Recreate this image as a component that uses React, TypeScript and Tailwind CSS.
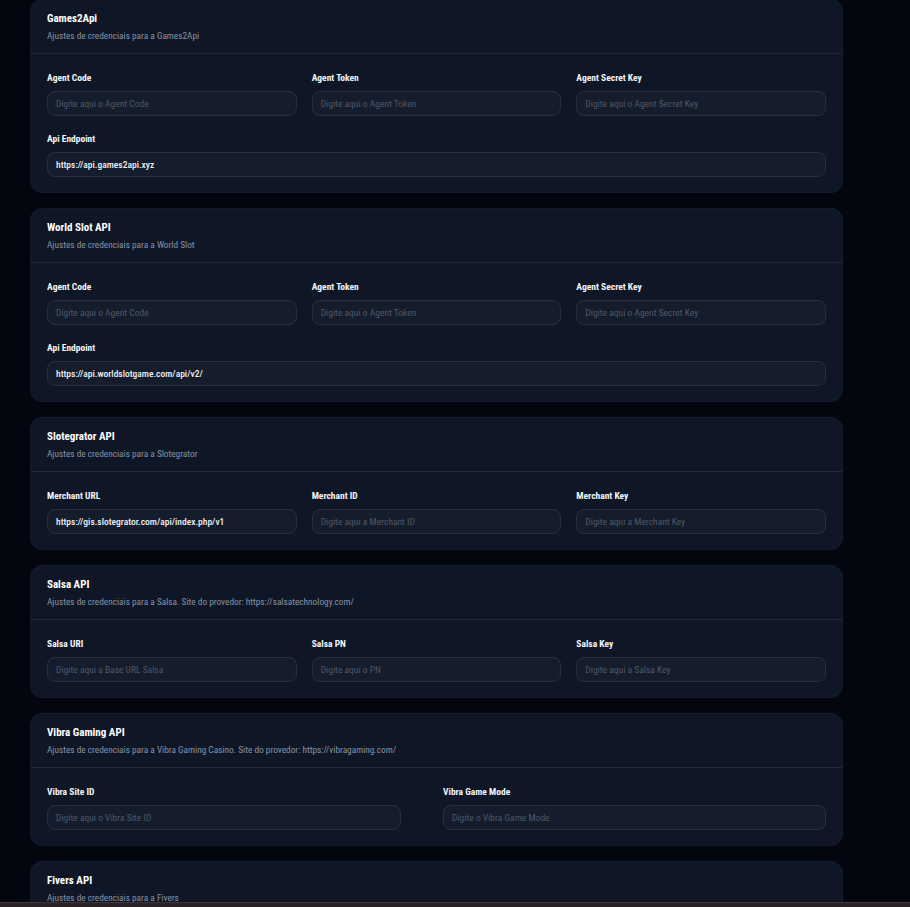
import React from 'react'

interface Field {
  label: string
  placeholder: string
  value?: string
}

interface Provider {
  title: string
  subtitle: string
  rows: Field[][]
  cols?: string
}

const providers: Provider[] = [
  {
    title: 'Games2Api',
    subtitle: 'Ajustes de credenciais para a Games2Api',
    rows: [
      [
        { label: 'Agent Code', placeholder: 'Digite aqui o Agent Code' },
        { label: 'Agent Token', placeholder: 'Digite aqui o Agent Token' },
        { label: 'Agent Secret Key', placeholder: 'Digite aqui o Agent Secret Key' },
      ],
      [{ label: 'Api Endpoint', placeholder: 'Digite aqui o Api Endpoint', value: 'https://api.games2api.xyz' }],
    ],
  },
  {
    title: 'World Slot API',
    subtitle: 'Ajustes de credenciais para a World Slot',
    rows: [
      [
        { label: 'Agent Code', placeholder: 'Digite aqui o Agent Code' },
        { label: 'Agent Token', placeholder: 'Digite aqui o Agent Token' },
        { label: 'Agent Secret Key', placeholder: 'Digite aqui o Agent Secret Key' },
      ],
      [{ label: 'Api Endpoint', placeholder: 'Digite aqui o Api Endpoint', value: 'https://api.worldslotgame.com/api/v2/' }],
    ],
  },
  {
    title: 'Slotegrator API',
    subtitle: 'Ajustes de credenciais para a Slotegrator',
    rows: [
      [
        { label: 'Merchant URL', placeholder: 'Digite aqui a Merchant URL', value: 'https://gis.slotegrator.com/api/index.php/v1' },
        { label: 'Merchant ID', placeholder: 'Digite aqui a Merchant ID' },
        { label: 'Merchant Key', placeholder: 'Digite aqui a Merchant Key' },
      ],
    ],
  },
  {
    title: 'Salsa API',
    subtitle: 'Ajustes de credenciais para a Salsa. Site do provedor: https://salsatechnology.com/',
    rows: [
      [
        { label: 'Salsa URI', placeholder: 'Digite aqui a Base URL Salsa' },
        { label: 'Salsa PN', placeholder: 'Digite aqui o PN' },
        { label: 'Salsa Key', placeholder: 'Digite aqui a Salsa Key' },
      ],
    ],
  },
  {
    title: 'Vibra Gaming API',
    subtitle: 'Ajustes de credenciais para a Vibra Gaming Casino. Site do provedor: https://vibragaming.com/',
    cols: 'vibra',
    rows: [
      [
        { label: 'Vibra Site ID', placeholder: 'Digite aqui o Vibra Site ID' },
        { label: 'Vibra Game Mode', placeholder: 'Digite o Vibra Game Mode' },
      ],
    ],
  },
  {
    title: 'Fivers API',
    subtitle: 'Ajustes de credenciais para a Fivers',
    rows: [
      [
        { label: 'Agent Code', placeholder: 'Digite aqui o Agent Code' },
        { label: 'Agent Token', placeholder: 'Digite aqui o Agent Token' },
        { label: 'Agent Secret Key', placeholder: 'Digite aqui o Agent Secret Key' },
      ],
    ],
  },
]

const FONT = "font-['Roboto_Condensed',Roboto,sans-serif]"

function Input({ field }: { field: Field }) {
  return (
    <div className="flex flex-col">
      <label className="text-[9.5px] leading-[14px] font-bold text-[#f1f5f9]">{field.label}</label>
      <input
        defaultValue={field.value}
        placeholder={field.placeholder}
        className="mt-[6px] h-[25px] w-full rounded-lg border border-[#263042] bg-[#151d2c] px-[8px] text-[9.5px] font-medium text-[#eef1f5] outline-none placeholder:font-normal placeholder:text-[#4d5769]"
      />
    </div>
  )
}

function ProviderCard({ p }: { p: Provider }) {
  return (
    <section className="rounded-xl bg-[#0f1727] border border-[#131c2d]">
      <div className="px-4 pt-[11px] pb-[11px] border-b border-[#1f293a]">
        <h3 className="text-[11px] leading-[15px] font-bold text-white">{p.title}</h3>
        <p className="mt-[3px] text-[9.3px] leading-[13px] text-[#8593a8]">{p.subtitle}</p>
      </div>
      <div className="px-4 pt-[17px] pb-[15px] flex flex-col gap-[16px]">
        {p.rows.map((row, i) => (
          <div
            key={i}
            className={
              p.cols === 'vibra'
                ? 'grid grid-cols-[354px_383px] justify-between'
                : row.length === 1
                  ? 'grid grid-cols-1'
                  : 'grid grid-cols-3 gap-x-[15px]'
            }
          >
            {row.map((f) => (
              <Input key={f.label} field={f} />
            ))}
          </div>
        ))}
      </div>
    </section>
  )
}

export default function App() {
  return (
    <div className={`h-[907px] overflow-hidden bg-[#03060f] ${FONT}`}>
      <div className="w-[813px] ml-[30px] -mt-[1px] flex flex-col gap-[15px] pb-10">
        {providers.map((p) => (
          <ProviderCard key={p.title} p={p} />
        ))}
      </div>
      {/* system bar along the bottom edge */}
      <div className="fixed bottom-0 left-0 right-0 h-[5px] bg-[#2a2227] border-t border-[#3d383f]" />
    </div>
  )
}
